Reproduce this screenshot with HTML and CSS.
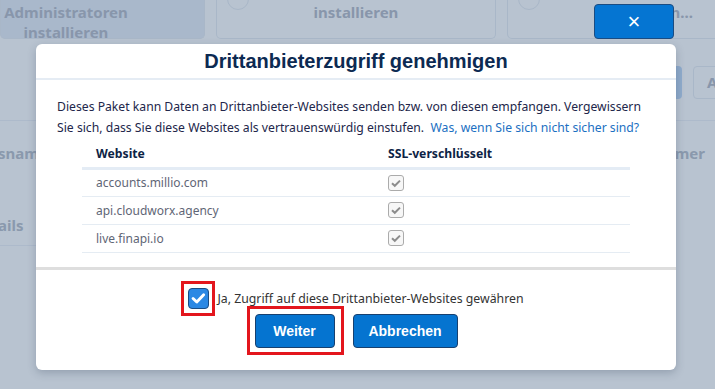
FILE: index.html
```html
<!DOCTYPE html>
<html lang="de">
<head>
    <meta charset="UTF-8">
    <title>Drittanbieterzugriff genehmigen</title>
    <link rel="stylesheet" href="styles.css">
</head>
<body>

    <!-- Page behind the dialog -->
    <div class="page">
        <div class="tiles">
            <div class="tile tile-admin">Administratoren<br>installieren</div>
            <div class="tile tile-install"><span class="radio"></span>installieren</div>
            <div class="tile tile-more"><span class="radio"></span>Installation...</div>
        </div>

        <div class="toolbar">
            <div class="tool tool-primary"></div>
            <div class="tool tool-outline">Alle</div>
        </div>

        <div class="fields">
            <div class="field-row">
                <span class="field-label cut-left">snam</span>
                <span class="field-label">Nummer</span>
            </div>
            <div class="field-row field-row-last">
                <span class="field-label cut-left">ails</span>
            </div>
        </div>
    </div>

    <!-- Dialog -->
    <div class="modal">
        <h1 class="modal-title">Drittanbieterzugriff genehmigen</h1>

        <div class="modal-body">
            <p>Dieses Paket kann Daten an Drittanbieter-Websites senden bzw. von diesen empfangen. Vergewissern Sie sich, dass Sie diese Websites als vertrauenswürdig einstufen.&nbsp; <a href="#">Was, wenn Sie sich nicht sicher sind?</a></p>

            <table class="sites">
                <thead>
                    <tr>
                        <th class="col-site">Website</th>
                        <th class="col-ssl">SSL-verschlüsselt</th>
                    </tr>
                </thead>
                <tbody>
                    <tr>
                        <td>accounts.millio.com</td>
                        <td class="col-ssl"><span class="ssl-box"><svg viewBox="0 0 16 16" width="16" height="16"><path d="M4 8.2 L6.8 10.8 L12 5.6" fill="none" stroke="#8c8c8c" stroke-width="2"/></svg></span></td>
                    </tr>
                    <tr>
                        <td>api.cloudworx.agency</td>
                        <td class="col-ssl"><span class="ssl-box"><svg viewBox="0 0 16 16" width="16" height="16"><path d="M4 8.2 L6.8 10.8 L12 5.6" fill="none" stroke="#8c8c8c" stroke-width="2"/></svg></span></td>
                    </tr>
                    <tr>
                        <td>live.finapi.io</td>
                        <td class="col-ssl"><span class="ssl-box"><svg viewBox="0 0 16 16" width="16" height="16"><path d="M4 8.2 L6.8 10.8 L12 5.6" fill="none" stroke="#8c8c8c" stroke-width="2"/></svg></span></td>
                    </tr>
                </tbody>
            </table>
        </div>

        <div class="modal-footer">
            <label class="agree">
                <span class="agree-box marked marked-check"><svg viewBox="0 0 21 21" width="19" height="19"><path d="M4.5 10.5 L8.6 14.4 L16.2 6.4" fill="none" stroke="#fff" stroke-width="3.2" stroke-linecap="round" stroke-linejoin="round"/></svg></span>
                Ja, Zugriff auf diese Drittanbieter-Websites gewähren
            </label>
            <div class="actions">
                <button type="button" class="btn btn-next marked marked-btn">Weiter</button>
                <button type="button" class="btn btn-cancel">Abbrechen</button>
            </div>
        </div>
    </div>

    <button type="button" class="close-btn">×</button>

</body>
</html>
```

FILE: styles.css
```css
* {
    box-sizing: border-box;
}

body {
    margin: 0;
    width: 715px;
    height: 389px;
    overflow: hidden;
    position: relative;
    background-color: #b8c3d0;
    font-family: "Noto Sans", sans-serif;
}

/* page behind the dialog */
.tiles {
    display: flex;
    gap: 11px;
    height: 39px;
}

.tile {
    position: relative;
    flex-shrink: 0;
    border: 1px solid #a9b7c8;
    border-top: none;
    border-radius: 0 0 5px 5px;
    color: #8896ab;
    font-weight: bold;
    font-size: 15px;
    line-height: 20px;
    text-align: center;
    padding-top: 2px;
}

.tile-admin {
    width: 205px;
    background: #a9b8cb;
    padding-right: 73px;
}

.tile-install {
    width: 280px;
}

.tile-more {
    width: 240px;
    text-align: right;
    padding-right: 53px;
    white-space: nowrap;
}

.radio {
    position: absolute;
    left: 10px;
    top: -12px;
    width: 22px;
    height: 22px;
    border: 1px solid #a9b7c8;
    border-radius: 50%;
}

.toolbar {
    display: flex;
    gap: 11px;
    padding-left: 600px;
    margin-top: 27px;
    height: 33px;
}

.tool {
    flex-shrink: 0;
    border-radius: 4px;
}

.tool-primary {
    width: 82px;
    background: #8eaacb;
}

.tool-outline {
    width: 80px;
    border: 1px solid #a9b7c8;
    color: #8896ab;
    font-weight: bold;
    font-size: 15px;
    line-height: 31px;
    padding-left: 13px;
}

.fields {
    margin-top: 21px;
    border-top: 1px solid #adbacb;
}

.field-row {
    display: flex;
    justify-content: space-between;
    height: 72px;
    padding: 22px 10px 0 0;
    white-space: nowrap;
}

.field-row-last {
    height: 53px;
    width: 50%;
    border-bottom: 1px solid #adbacb;
}

.field-label {
    color: #8a99ad;
    font-weight: bold;
    font-size: 15px;
    line-height: 20px;
}

.cut-left {
    margin-left: -2px;
}

/* dialog */
.modal {
    position: absolute;
    left: 36px;
    top: 44px;
    width: 640px;
    height: 326px;
    background: #fff;
    border-radius: 6px;
    box-shadow: 0 3px 8px rgba(40, 55, 80, 0.25);
}

.modal-title {
    margin: 0;
    height: 36px;
    border-bottom: 2px solid #e5ecf4;
    font-family: "Liberation Sans", Arial, sans-serif;
    font-size: 20px;
    line-height: 34px;
    color: #0c2a52;
    text-align: center;
}

.modal-body {
    padding: 16px 21px 14px;
    border-bottom: 3px solid #dedede;
    font-size: 12.2px;
    line-height: 21px;
    color: #22264a;
}

.modal-body p {
    margin: 0;
}

.modal-body a {
    color: #1b6fc2;
    text-decoration: none;
}

.sites {
    margin: 3px 0 0 25px;
    width: 548px;
    border-collapse: collapse;
}

.sites th {
    height: 27px;
    padding: 0 14px;
    text-align: left;
    color: #0d2345;
    border-bottom: 3px solid #e4ecf5;
}

.sites td {
    height: 28px;
    padding: 0 14px;
    font-size: 12px;
    color: #5f6676;
    border-bottom: 1px solid #e5ecf3;
}

.sites .col-site {
    width: 306px;
}

.sites .col-ssl {
    padding-left: 0;
}

.ssl-box {
    display: block;
    width: 16px;
    height: 16px;
    border: 1px solid #ababab;
    border-radius: 3px;
    background: #f7f7f7;
}

.ssl-box svg {
    display: block;
    margin: -1px;
}

.modal-footer {
    display: flex;
    flex-direction: column;
    align-items: center;
    gap: 5px;
    padding-top: 18px;
}

.agree {
    display: flex;
    align-items: center;
    gap: 8px;
    font-size: 12.3px;
    color: #333;
}

.agree-box {
    display: flex;
    align-items: center;
    justify-content: center;
    width: 21px;
    height: 21px;
    background: #2b88e4;
    border: 1px solid #1a4c84;
    border-radius: 4px;
}

.actions {
    display: flex;
    gap: 18px;
}

.btn {
    height: 34px;
    background: #0574d0;
    border: 1px solid #17406f;
    border-radius: 4px;
    color: #fff;
    font-family: "Liberation Sans", Arial, sans-serif;
    font-weight: bold;
    font-size: 14px;
}

.btn-next {
    width: 80px;
}

.btn-cancel {
    width: 105px;
}

/* red markers drawn over the screenshot */
.marked {
    position: relative;
}

.marked::after {
    content: "";
    position: absolute;
    border: 3px solid #e3161d;
}

.marked-check::after {
    inset: -8px -7px -8px -8px;
}

.marked-btn::after {
    inset: -9px -10px -8px -9px;
}

.close-btn {
    position: absolute;
    left: 594px;
    top: 4px;
    width: 80px;
    height: 35px;
    background: #0575d2;
    border: 1px solid #1b4c82;
    border-radius: 4px;
    color: #fff;
    font-family: "Liberation Sans", Arial, sans-serif;
    font-size: 22px;
    line-height: 1;
}
```
